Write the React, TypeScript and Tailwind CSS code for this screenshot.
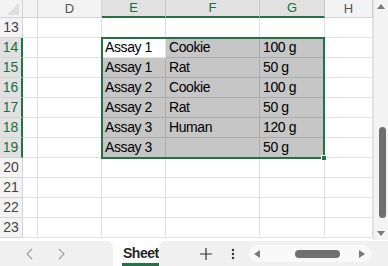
import React from 'react'

const cols = [
  { key: 'C', label: '', w: 'w-[15px]' },
  { key: 'D', label: 'D', w: 'w-[64px]' },
  { key: 'E', label: 'E', w: 'w-[64px]' },
  { key: 'F', label: 'F', w: 'w-[94px]' },
  { key: 'G', label: 'G', w: 'w-[65px]' },
  { key: 'H', label: 'H', w: 'w-[48px]' },
]

const data: Record<number, string[]> = {
  14: ['Assay 1', 'Cookie', '100 g'],
  15: ['Assay 1', 'Rat', '50 g'],
  16: ['Assay 2', 'Cookie', '100 g'],
  17: ['Assay 2', 'Rat', '50 g'],
  18: ['Assay 3', 'Human', '120 g'],
  19: ['Assay 3', '', '50 g'],
}

const rows = [13, 14, 15, 16, 17, 18, 19, 20, 21, 22, 23]
const selCols = ['E', 'F', 'G']

export default function App() {
  return (
    <div className="w-[388px] h-[266px] bg-white overflow-hidden" style={{ fontFamily: '"Liberation Sans", Arial, sans-serif' }}>
      <div className="flex h-[240px]">
        {/* sheet grid */}
        <div className="w-[373px] relative">
          {/* column headers */}
          <div className="flex h-[18px]">
            <div className="w-[23px] h-[18px] bg-[#f3f3f3] border-r border-b border-[#d4d4d4] flex items-end justify-end pr-[3px] pb-[2px]">
              <div className="w-0 h-0 border-l-[12px] border-l-transparent border-b-[12px] border-b-[#dedede]" />
            </div>
            {cols.map((c) => {
              const sel = selCols.includes(c.key)
              return (
                <div
                  key={c.key}
                  className={`${c.w} h-[18px] flex items-center justify-center text-[13px] border-r ${sel ? 'bg-[#e1e1e1] text-[#1e6c41] border-b-2 border-b-[#217346] border-r-[#c8c8c8]' : 'bg-[#f3f3f3] text-[#555] border-b border-b-[#d4d4d4] border-r-[#d4d4d4]'}`}
                >
                  {c.label}
                </div>
              )
            })}
          </div>
          {rows.map((r) => {
            const selRow = r >= 14 && r <= 19
            const vals = data[r]
            return (
              <div key={r} className="flex h-[20px]">
                <div
                  className={`w-[23px] h-[20px] flex items-center justify-center text-[14px] border-b border-[#d4d4d4] ${selRow ? 'bg-[#e1e1e1] text-[#1e6c41] border-r-2 border-r-[#217346]' : 'bg-[#f3f3f3] text-[#444] border-r border-r-[#d4d4d4]'}`}
                >
                  {r}
                </div>
                {cols.map((c) => {
                  const idx = selCols.indexOf(c.key)
                  const inSel = selRow && idx >= 0
                  const active = r === 14 && c.key === 'E'
                  const gray = inSel && !active
                  return (
                    <div
                      key={c.key}
                      className={`${c.w} h-[20px] pl-[3px] flex items-center text-[14px] tracking-[-0.4px] text-black whitespace-nowrap overflow-hidden border-r border-b ${gray ? 'bg-[#c6c6c6] border-[#ababab]' : 'bg-white border-[#e1e1e1]'}`}
                    >
                      {inSel && vals ? vals[idx] : ''}
                    </div>
                  )
                })}
              </div>
            )
          })}
          {/* selection outline + fill handle (overlay) */}
          <div className="absolute left-[101px] top-[37px] w-[224px] h-[122px] border-2 border-[#217346] pointer-events-none" />
          <div className="absolute left-[321px] top-[155px] w-[6px] h-[6px] bg-[#217346] border border-white" />
        </div>
        {/* vertical scrollbar */}
        <div className="w-[15px] bg-[#f3f3f3] border-l border-[#e1e1e1] flex flex-col items-center pt-[4px] pb-[4px]">
          <div className="w-0 h-0 border-l-[4px] border-r-[4px] border-b-[5px] border-l-transparent border-r-transparent border-b-[#7a7a7a]" />
          <div className="mt-[118px] ml-[2px] w-[7px] h-[91px] rounded-[4px] bg-[#6e6e6e]" />
          <div className="mt-auto w-0 h-0 border-l-[4px] border-r-[4px] border-t-[5px] border-l-transparent border-r-transparent border-t-[#7a7a7a]" />
        </div>
      </div>
      {/* bottom bar */}
      <div className="flex h-[26px] pt-[1px]">
        <div className="w-[113px] bg-[#f0f0f0] rounded-tr-[6px] flex items-center gap-[21px] pl-[25px]">
          <svg width="10" height="12" viewBox="0 0 10 12">
            <path d="M7 1 L2 6 L7 11" fill="none" stroke="#9e9e9e" strokeWidth="1.2" />
          </svg>
          <svg width="10" height="12" viewBox="0 0 10 12">
            <path d="M3 1 L8 6 L3 11" fill="none" stroke="#9e9e9e" strokeWidth="1.2" />
          </svg>
        </div>
        <div className="w-[46px] h-[25px] bg-white overflow-hidden flex flex-col">
          <div className="pl-[10px] pt-[4px] h-[22px] text-[14px] leading-[16px] font-semibold tracking-[-0.5px] text-[#242424] whitespace-nowrap">Sheet1</div>
          <div className="ml-[9px] h-[3px] bg-[#217346]" />
        </div>
        <div className="flex-1 bg-[#f0f0f0] rounded-tl-[6px] flex items-center pl-[40px]">
          <svg width="14" height="14" viewBox="0 0 14 14">
            <path d="M7 1 V13 M1 7 H13" stroke="#333" strokeWidth="1.2" />
          </svg>
          <svg width="4" height="14" viewBox="0 0 4 14" className="ml-[18px]">
            <circle cx="2" cy="3" r="1.2" fill="#333" />
            <circle cx="2" cy="7" r="1.2" fill="#333" />
            <circle cx="2" cy="11" r="1.2" fill="#333" />
          </svg>
          <div className="ml-[14px] w-[122px] h-[17px] rounded-full bg-[#f9f9f9] flex items-center pl-[5px] pr-[6px]">
            <div className="w-0 h-0 border-t-[4.5px] border-b-[4.5px] border-r-[6px] border-t-transparent border-b-transparent border-r-[#7a7a7a]" />
            <div className="ml-[35px] w-[45px] h-[8px] rounded-full bg-[#707070]" />
            <div className="ml-auto w-0 h-0 border-t-[4.5px] border-b-[4.5px] border-l-[6px] border-t-transparent border-b-transparent border-l-[#7a7a7a]" />
          </div>
        </div>
      </div>
    </div>
  )
}
